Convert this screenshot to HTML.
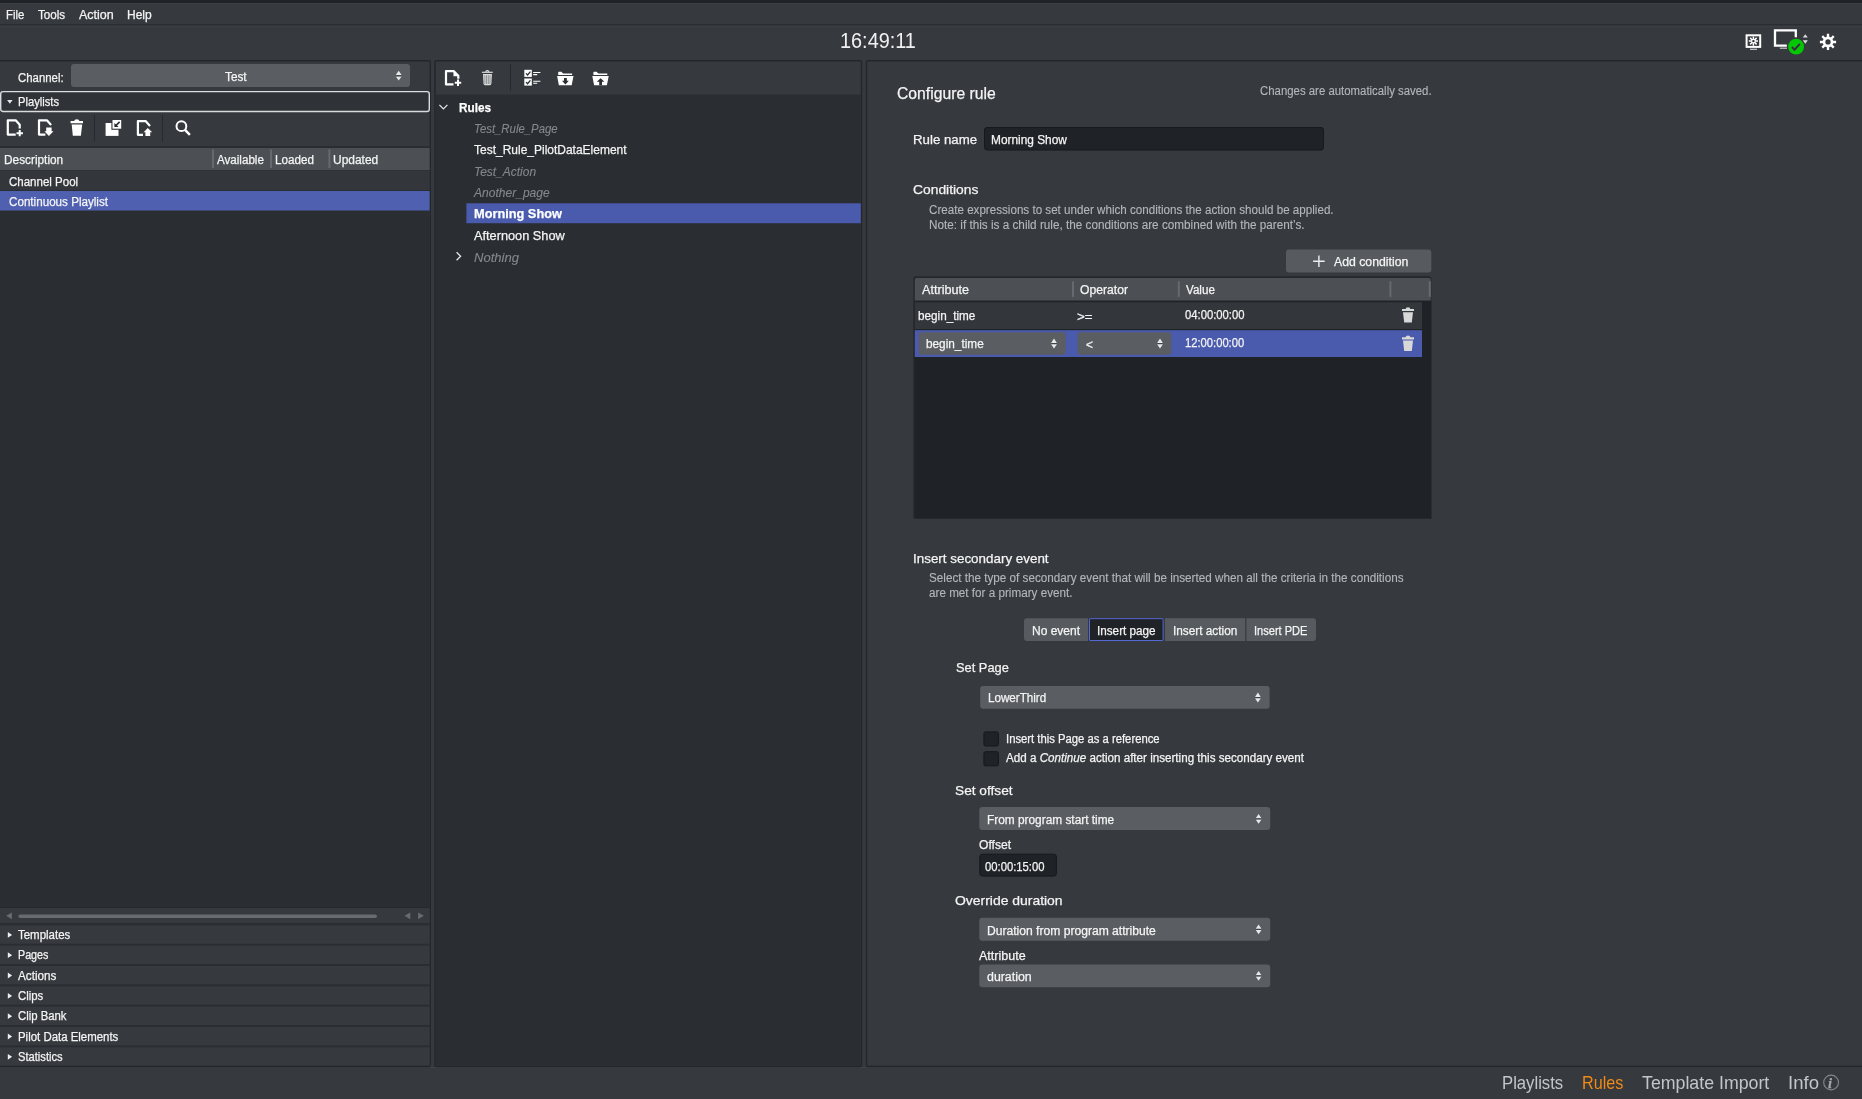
<!DOCTYPE html>
<html><head><meta charset="utf-8"><title>Rules</title>
<style>
html,body{margin:0;padding:0;}
body{width:1862px;height:1099px;overflow:hidden;background:#36393e;font-family:"Liberation Sans",sans-serif;position:relative;}
.b{position:absolute;box-sizing:border-box;}
.t{position:absolute;white-space:nowrap;line-height:20px;height:20px;transform-origin:0 0;-webkit-text-stroke:0.25px;}
svg{position:absolute;overflow:visible;}
</style></head><body>
<svg style="left:0;top:0" width="1862" height="1099" viewBox="0 0 1862 1099"><rect x="0.00" y="0.00" width="1862.00" height="3.00" fill="#1f2226"/>
<rect x="0.00" y="3.00" width="1862.00" height="1.00" fill="#3c3f44"/>
<rect x="0.00" y="24.00" width="1862.00" height="1.00" fill="#2a2d31"/>
<rect x="0.00" y="25.00" width="1862.00" height="1.00" fill="#32353a"/>
<rect x="0.00" y="26.00" width="1862.00" height="1.00" fill="#3c3f44"/>
<rect x="0.00" y="1067.00" width="1862.00" height="1.00" fill="#3d4045"/>
<rect x="-4.30" y="60.70" width="434.60" height="1005.80" rx="1.5000000000000002" fill="#36393e" stroke="#23262a" stroke-width="1.4"/>
<rect x="434.90" y="60.70" width="426.60" height="1005.80" rx="1.5000000000000002" fill="#36393e" stroke="#23262a" stroke-width="1.4"/>
<rect x="866.50" y="60.70" width="1002.80" height="1005.80" rx="1.5000000000000002" fill="#36393e" stroke="#23262a" stroke-width="1.4"/>
<rect x="71.00" y="64.00" width="339.00" height="23.00" rx="3.0" fill="#5a5e62"/>
<rect x="0.70" y="91.60" width="428.60" height="19.90" rx="2.3" fill="#2f3236" stroke="#dadcde" stroke-width="1.4"/>
<rect x="94.00" y="115.00" width="1.00" height="26.50" fill="#26292d"/>
<rect x="162.00" y="115.00" width="1.00" height="26.50" fill="#26292d"/>
<rect x="0.00" y="146.00" width="429.60" height="761.00" fill="#2a2e32"/>
<rect x="0.00" y="148.00" width="429.60" height="22.00" fill="#4c5054"/>
<rect x="212.00" y="149.50" width="2.00" height="18.50" fill="#666a6e"/>
<rect x="270.00" y="149.50" width="2.00" height="18.50" fill="#666a6e"/>
<rect x="328.40" y="149.50" width="2.00" height="18.50" fill="#666a6e"/>
<rect x="0.00" y="170.50" width="429.60" height="19.50" fill="#33363b"/>
<rect x="0.00" y="191.00" width="429.60" height="19.50" fill="#4f60b0"/>
<rect x="0.00" y="907.00" width="429.60" height="1.00" fill="#25282c"/>
<rect x="0.00" y="908.00" width="429.60" height="15.00" fill="#36393e"/>
<rect x="18.40" y="914.60" width="358.60" height="3.40" rx="2.0" fill="#686c70"/>
<rect x="0.00" y="923.00" width="429.60" height="142.80" fill="#2a2d31"/>
<rect x="0.00" y="925.30" width="429.60" height="18.50" fill="#36393e"/>
<rect x="0.00" y="945.60" width="429.60" height="18.50" fill="#36393e"/>
<rect x="0.00" y="965.90" width="429.60" height="18.50" fill="#36393e"/>
<rect x="0.00" y="986.30" width="429.60" height="18.50" fill="#36393e"/>
<rect x="0.00" y="1006.60" width="429.60" height="18.50" fill="#36393e"/>
<rect x="0.00" y="1026.90" width="429.60" height="18.50" fill="#36393e"/>
<rect x="0.00" y="1047.20" width="429.60" height="18.50" fill="#36393e"/>
<rect x="435.60" y="94.50" width="425.20" height="971.30" fill="#2a2e32"/>
<rect x="510.00" y="64.40" width="1.00" height="26.30" fill="#26292d"/>
<rect x="466.40" y="203.30" width="394.40" height="19.90" fill="#4a5bae"/>
<rect x="984.50" y="127.50" width="339.00" height="22.50" rx="2.5" fill="#1f2226" stroke="#17191c" stroke-width="1.0"/>
<rect x="1286.00" y="249.50" width="145.30" height="23.00" rx="3.0" fill="#575b5f"/>
<path d="M916.30 276.20 H1428.30 A3.0 3.0 0 0 1 1431.30 279.20 V518.50 A0.0 0.0 0 0 1 1431.30 518.50 H913.30 A0.0 0.0 0 0 1 913.30 518.50 V279.20 A3.0 3.0 0 0 1 916.30 276.20 Z" fill="#25282c"/>
<rect x="914.80" y="300.60" width="516.50" height="217.90" fill="#1f2226"/>
<path d="M916.80 277.90 H1428.70 A2.0 2.0 0 0 1 1430.70 279.90 V300.60 A0.0 0.0 0 0 1 1430.70 300.60 H914.80 A0.0 0.0 0 0 1 914.80 300.60 V279.90 A2.0 2.0 0 0 1 916.80 277.90 Z" fill="#4c5054"/>
<rect x="1072.00" y="281.30" width="2.00" height="15.60" fill="#666a6e"/>
<rect x="1177.80" y="281.30" width="2.00" height="15.60" fill="#666a6e"/>
<rect x="1389.40" y="281.30" width="2.00" height="15.60" fill="#666a6e"/>
<rect x="1428.80" y="281.30" width="2.00" height="15.60" fill="#666a6e"/>
<rect x="914.80" y="302.20" width="507.20" height="26.80" fill="#33363b"/>
<rect x="914.80" y="330.20" width="507.20" height="26.80" fill="#4a5bae"/>
<rect x="918.70" y="332.20" width="147.10" height="22.50" rx="3.0" fill="#5a5e62"/>
<rect x="1077.60" y="332.20" width="93.70" height="22.50" rx="3.0" fill="#5a5e62"/>
<path d="M1027.00 618.20 H1088.00 A0.0 0.0 0 0 1 1088.00 618.20 V641.00 A0.0 0.0 0 0 1 1088.00 641.00 H1027.00 A3.0 3.0 0 0 1 1024.00 638.00 V621.20 A3.0 3.0 0 0 1 1027.00 618.20 Z" fill="#575b5f"/>
<rect x="1089.50" y="618.70" width="73.60" height="21.80" rx="0.5" fill="#1f2226" stroke="#5468d6" stroke-width="1.0"/>
<rect x="1165.00" y="618.20" width="80.20" height="22.80" fill="#575b5f"/>
<path d="M1246.40 618.20 H1313.00 A3.0 3.0 0 0 1 1316.00 621.20 V638.00 A3.0 3.0 0 0 1 1313.00 641.00 H1246.40 A0.0 0.0 0 0 1 1246.40 641.00 V618.20 A0.0 0.0 0 0 1 1246.40 618.20 Z" fill="#575b5f"/>
<rect x="980.20" y="686.00" width="289.40" height="22.80" rx="3.0" fill="#5a5e62"/>
<rect x="983.90" y="731.90" width="14.50" height="14.10" rx="1.5" fill="#1f2226" stroke="#17191c" stroke-width="1.0"/>
<rect x="983.90" y="751.70" width="14.50" height="14.10" rx="1.5" fill="#1f2226" stroke="#17191c" stroke-width="1.0"/>
<rect x="979.30" y="807.10" width="290.90" height="23.00" rx="3.0" fill="#5a5e62"/>
<rect x="979.80" y="854.20" width="76.60" height="21.90" rx="2.5" fill="#1f2226" stroke="#17191c" stroke-width="1.0"/>
<rect x="979.30" y="917.70" width="290.90" height="23.10" rx="3.0" fill="#5a5e62"/>
<rect x="979.30" y="964.60" width="290.90" height="22.70" rx="3.0" fill="#5a5e62"/></svg>
<svg style="left:0;top:0" width="1862" height="1099" viewBox="0 0 1862 1099"><path d="M15.7 134.55 H7.800000000000001 V120.35 H15.7 L19.7 124.85 V128.45" fill="none" stroke="#ffffff" stroke-width="2.2" stroke-linejoin="round"/><path d="M16.5 133.15 H22.9 M19.7 129.95 V136.35" stroke="#ffffff" stroke-width="2" fill="none"/><path d="M45.4 134.55 H39.0 V120.35 H46.9 L51.099999999999994 125.05" fill="none" stroke="#ffffff" stroke-width="2.2" stroke-linejoin="round"/><path d="M46.2 127.55 H51.599999999999994 V131.25 H53.5 L48.9 136.05 L44.4 131.25 H46.2 Z" fill="#ffffff"/><path d="M70.6 121 H74.2 Q74.4 119.2 76.8 119.2 Q79.2 119.2 79.4 121 H83 V123.3 H70.6 Z M71.7 124.4 H82.2 L80.9 135.7 H72.8 Z" fill="#ffffff"/><rect x="105.6" y="123" width="12.9" height="12.9" fill="#ffffff"/><rect x="111.4" y="119.2" width="10.6" height="10.6" fill="#36393e"/><rect x="112.5" y="120" width="8.7" height="8.7" fill="#ffffff"/><path d="M119.6 121.9 L116 125.5" stroke="#24272b" stroke-width="1.6" fill="none"/><path d="M114.4 122.9 V127.1 H118.6 Z" fill="#24272b"/><path d="M143.0 134.8 H137.9 V121.1 H145.60000000000002 L150.0 126.0" fill="none" stroke="#ffffff" stroke-width="2.2" stroke-linejoin="round"/><path d="M147.8 127.9 L152.20000000000002 132.3 H150.20000000000002 V135.9 H145.4 V132.3 H143.60000000000002 Z" fill="#ffffff"/><circle cx="181.4" cy="126.2" r="4.9" fill="none" stroke="#ffffff" stroke-width="2"/><path d="M185 129.9 L189.9 134.9" stroke="#ffffff" stroke-width="2.5" stroke-linecap="butt"/><path d="M453.5 84.45 H446.0 V71.14999999999999 H453.9 L458.29999999999995 75.64999999999999 V78.85" fill="none" stroke="#ffffff" stroke-width="2.2" stroke-linejoin="round"/><path d="M453.5 71.45 V76.25 H457.9 Z" fill="#ffffff"/><path d="M454.79999999999995 82.75 H461.2 M458.0 79.55 V85.95" stroke="#ffffff" stroke-width="2" fill="none"/><path d="M481.9 72.3 H492.7" stroke="#dcdddd" stroke-width="1.2"/><path d="M485.6 71.8 Q487.3 69.4 489 71.8" stroke="#dcdddd" stroke-width="1.2" fill="none"/><path d="M483 74 H491.9 L491.4 83.6 Q491.3 85.2 489.8 85.2 H485.1 Q483.6 85.2 483.5 83.6 Z" fill="#dcdddd"/><path d="M484.9 75.2 V84" stroke="#4a4d52" stroke-width="0.55"/><path d="M486.6 75.2 V84" stroke="#4a4d52" stroke-width="0.55"/><path d="M488.3 75.2 V84" stroke="#4a4d52" stroke-width="0.55"/><path d="M490.0 75.2 V84" stroke="#4a4d52" stroke-width="0.55"/><rect x="524.3" y="69.8" width="7.5" height="7.1" fill="#ffffff"/><path d="M526 73.39999999999999 L527.6 75.0 L530.4 71.7" stroke="#2a2d31" stroke-width="1.3" fill="none"/><path d="M533.2 72.5 H540.4 M533.2 74.6 H537.2" stroke="#ffffff" stroke-width="1.1"/><rect x="524.3" y="78.5" width="7.5" height="7.1" fill="#ffffff"/><path d="M526 82.1 L527.6 83.7 L530.4 80.4" stroke="#2a2d31" stroke-width="1.3" fill="none"/><path d="M533.2 81.2 H540.4 M533.2 83.3 H537.2" stroke="#ffffff" stroke-width="1.1"/><path d="M558.2 74.9 V72.2 Q558.2 71.7 558.8000000000001 71.7 H561.4 L563.1 73.4 H572.1 V74.9 Z" fill="#ffffff"/><path d="M557.1 76 H573.5 L571.7 85.2 H558.9 Z" fill="#ffffff"/><path d="M564.0 78 H566.8 V80.8 H568.8 L565.4 84.4 L562.0 80.8 H564.0 Z" fill="#2a2d31"/><path d="M593.4 74.9 V72.2 Q593.4 71.7 594.0 71.7 H596.5999999999999 L598.3 73.4 H607.3 V74.9 Z" fill="#ffffff"/><path d="M592.3 76 H608.6999999999999 L606.9 85.2 H594.0999999999999 Z" fill="#ffffff"/><path d="M600.5999999999999 78.3 L604.3999999999999 81.8 H601.9999999999999 V85.3 H599.1999999999999 V81.8 H596.8 Z" fill="#2a2d31"/><rect x="1746.6" y="35.3" width="13.6" height="11.6" fill="none" stroke="#ffffff" stroke-width="2"/><path d="M1750 49.3 H1757" stroke="#c8c8c8" stroke-width="1.2"/><path d="M1755.00 41.10 L1758.00 41.10 M1754.53 42.23 L1756.65 44.35 M1753.40 42.70 L1753.40 45.70 M1752.27 42.23 L1750.15 44.35 M1751.80 41.10 L1748.80 41.10 M1752.27 39.97 L1750.15 37.85 M1753.40 39.50 L1753.40 36.50 M1754.53 39.97 L1756.65 37.85" stroke="#ffffff" stroke-width="1.5"/><circle cx="1753.4" cy="41.1" r="2.3" fill="#ffffff"/><circle cx="1753.4" cy="41.1" r="1.2" fill="#2a2d31"/><path d="M1786.8 45.6 H1775 V30.4 H1795.8 V37.2" fill="none" stroke="#ffffff" stroke-width="2.3"/><path d="M1779.8 48.2 H1787" stroke="#c8c8c8" stroke-width="1.2"/><circle cx="1796.1" cy="46.7" r="7.9" fill="#04c704"/><path d="M1791.9 47 L1794.6 49.7 L1799.9 43.9" fill="none" stroke="#3b2b45" stroke-width="2"/><path d="M1805.3 34.2 L1807.8 37.5 H1802.8 Z M1805.3 43.7 L1807.8 40.3 H1802.8 Z" fill="#dcdcdc"/><path d="M1832.50 41.95 L1836.10 41.95 M1831.18 45.13 L1833.73 47.68 M1828.00 46.45 L1828.00 50.05 M1824.82 45.13 L1822.27 47.68 M1823.50 41.95 L1819.90 41.95 M1824.82 38.77 L1822.27 36.22 M1828.00 37.45 L1828.00 33.85 M1831.18 38.77 L1833.73 36.22" stroke="#ffffff" stroke-width="2.4"/><circle cx="1828.0" cy="41.95" r="4.0" fill="none" stroke="#ffffff" stroke-width="2.7"/><path d="M1402 308.90000000000003 H1405.6 Q1405.8 307.3 1408 307.3 Q1410.2 307.3 1410.4 308.90000000000003 H1414 V311.1 H1402 Z M1403 312.2 H1413 L1411.8 322.6 H1404.2 Z" fill="#d8d8d8"/><path d="M1402 337.20000000000005 H1405.6 Q1405.8 335.6 1408 335.6 Q1410.2 335.6 1410.4 337.20000000000005 H1414 V339.40000000000003 H1402 Z M1403 340.5 H1413 L1411.8 350.90000000000003 H1404.2 Z" fill="#d8d8d8"/><path d="M1313.1 261.3 H1324.7 M1318.9 255.5 V267.1" stroke="#eeeeee" stroke-width="1.4"/><path d="M439.4 104.9 L443.4 108.9 L447.4 104.9" fill="none" stroke="#e6e6e6" stroke-width="1.3"/><path d="M456.6 252.3 L460.6 256.3 L456.6 260.3" fill="none" stroke="#e6e6e6" stroke-width="1.3"/><path d="M7.1 99.9 H12.6 L9.85 103.8 Z" fill="#e8e8e8"/><path d="M7.8 932.0 L12.1 934.9 L7.8 937.8 Z" fill="#eeeeee"/><path d="M7.8 952.3 L12.1 955.2 L7.8 958.1 Z" fill="#eeeeee"/><path d="M7.8 972.6 L12.1 975.5 L7.8 978.4 Z" fill="#eeeeee"/><path d="M7.8 993.0 L12.1 995.9 L7.8 998.8 Z" fill="#eeeeee"/><path d="M7.8 1013.3 L12.1 1016.2 L7.8 1019.1 Z" fill="#eeeeee"/><path d="M7.8 1033.6 L12.1 1036.5 L7.8 1039.4 Z" fill="#eeeeee"/><path d="M7.8 1053.9 L12.1 1056.8 L7.8 1059.7 Z" fill="#eeeeee"/><path d="M11.9 912.5 V919.2 L6.1 915.85 Z M410.3 912.5 V919.2 L404.5 915.85 Z M418.1 912.5 V919.2 L423.9 915.85 Z" fill="#686c70"/><circle cx="1831.1" cy="1082.5" r="7.4" fill="none" stroke="#85888b" stroke-width="1.1"/><path d="M398.70 70.80 L401.60 75.10 L395.80 75.10 Z M398.70 80.60 L401.60 76.40 L395.80 76.40 Z" fill="#e8e8e8"/><path d="M395.90 75.75 H401.50" stroke="#3c3f44" stroke-width="0.9"/><path d="M1054.00 338.60 L1056.90 342.90 L1051.10 342.90 Z M1054.00 348.40 L1056.90 344.20 L1051.10 344.20 Z" fill="#e8e8e8"/><path d="M1051.20 343.55 H1056.80" stroke="#3c3f44" stroke-width="0.9"/><path d="M1160.00 338.60 L1162.90 342.90 L1157.10 342.90 Z M1160.00 348.40 L1162.90 344.20 L1157.10 344.20 Z" fill="#e8e8e8"/><path d="M1157.20 343.55 H1162.80" stroke="#3c3f44" stroke-width="0.9"/><path d="M1257.90 692.60 L1260.80 696.90 L1255.00 696.90 Z M1257.90 702.40 L1260.80 698.20 L1255.00 698.20 Z" fill="#e8e8e8"/><path d="M1255.10 697.55 H1260.70" stroke="#3c3f44" stroke-width="0.9"/><path d="M1258.60 813.90 L1261.50 818.20 L1255.70 818.20 Z M1258.60 823.70 L1261.50 819.50 L1255.70 819.50 Z" fill="#e8e8e8"/><path d="M1255.80 818.85 H1261.40" stroke="#3c3f44" stroke-width="0.9"/><path d="M1258.60 924.50 L1261.50 928.80 L1255.70 928.80 Z M1258.60 934.30 L1261.50 930.10 L1255.70 930.10 Z" fill="#e8e8e8"/><path d="M1255.80 929.45 H1261.40" stroke="#3c3f44" stroke-width="0.9"/><path d="M1258.60 970.90 L1261.50 975.20 L1255.70 975.20 Z M1258.60 980.70 L1261.50 976.50 L1255.70 976.50 Z" fill="#e8e8e8"/><path d="M1255.80 975.85 H1261.40" stroke="#3c3f44" stroke-width="0.9"/></svg>
<div id="tx" style="position:absolute;left:0;top:0;width:1862px;height:1099px;will-change:transform;">
<span id="t0" class="t" style="left:6.4px;top:5.1px;font-size:12.3px;color:#f4f4f4;transform:scaleX(0.9179);">File</span>
<span id="t1" class="t" style="left:38.4px;top:5.1px;font-size:12.3px;color:#f4f4f4;transform:scaleX(0.9471);">Tools</span>
<span id="t2" class="t" style="left:78.7px;top:5.1px;font-size:12.3px;color:#f4f4f4;transform:scaleX(1.0150);">Action</span>
<span id="t3" class="t" style="left:126.7px;top:5.1px;font-size:12.3px;color:#f4f4f4;transform:scaleX(0.9764);">Help</span>
<span id="t4" class="t" style="left:840.0px;top:30.4px;font-size:22.9px;color:#f0f0f0;transform:scaleX(0.8684);-webkit-text-stroke:0;">16:49:11</span>
<span id="t5" class="t" style="left:17.8px;top:68.1px;font-size:12.3px;color:#f4f4f4;transform:scaleX(0.9262);">Channel:</span>
<span id="t6" class="t" style="left:225.1px;top:67.1px;font-size:12.3px;color:#f4f4f4;transform:scaleX(0.9573);">Test</span>
<span id="t7" class="t" style="left:18.1px;top:92.1px;font-size:12.3px;color:#f4f4f4;transform:scaleX(0.9111);">Playlists</span>
<span id="t8" class="t" style="left:3.7px;top:150.1px;font-size:12.3px;color:#f4f4f4;transform:scaleX(0.9624);">Description</span>
<span id="t9" class="t" style="left:216.7px;top:150.1px;font-size:12.3px;color:#f4f4f4;transform:scaleX(0.9439);">Available</span>
<span id="t10" class="t" style="left:275.1px;top:150.1px;font-size:12.3px;color:#f4f4f4;transform:scaleX(0.9477);">Loaded</span>
<span id="t11" class="t" style="left:333.2px;top:150.1px;font-size:12.3px;color:#f4f4f4;transform:scaleX(0.9720);">Updated</span>
<span id="t12" class="t" style="left:8.8px;top:172.1px;font-size:12.3px;color:#f4f4f4;transform:scaleX(0.9358);">Channel Pool</span>
<span id="t13" class="t" style="left:8.8px;top:192.1px;font-size:12.3px;color:#f4f4f4;transform:scaleX(0.9467);">Continuous Playlist</span>
<span id="t14" class="t" style="left:18.2px;top:925.1px;font-size:12.3px;color:#f4f4f4;transform:scaleX(0.9331);">Templates</span>
<span id="t15" class="t" style="left:18.2px;top:945.1px;font-size:12.3px;color:#f4f4f4;transform:scaleX(0.8717);">Pages</span>
<span id="t16" class="t" style="left:18.2px;top:966.1px;font-size:12.3px;color:#f4f4f4;transform:scaleX(0.9522);">Actions</span>
<span id="t17" class="t" style="left:18.2px;top:986.1px;font-size:12.3px;color:#f4f4f4;transform:scaleX(0.9253);">Clips</span>
<span id="t18" class="t" style="left:18.2px;top:1006.1px;font-size:12.3px;color:#f4f4f4;transform:scaleX(0.9213);">Clip Bank</span>
<span id="t19" class="t" style="left:18.2px;top:1027.1px;font-size:12.3px;color:#f4f4f4;transform:scaleX(0.9287);">Pilot Data Elements</span>
<span id="t20" class="t" style="left:18.2px;top:1047.1px;font-size:12.3px;color:#f4f4f4;transform:scaleX(0.9085);">Statistics</span>
<span id="t21" class="t" style="left:459.2px;top:97.7px;font-size:13.4px;color:#ffffff;transform:scaleX(0.8775);font-weight:bold;">Rules</span>
<span id="t22" class="t" style="left:474.2px;top:118.7px;font-size:13.4px;color:#85888b;transform:scaleX(0.8485);font-style:italic;-webkit-text-stroke:0.12px;">Test_Rule_Page</span>
<span id="t23" class="t" style="left:474.2px;top:139.7px;font-size:13.4px;color:#f4f4f4;transform:scaleX(0.8953);">Test_Rule_PilotDataElement</span>
<span id="t24" class="t" style="left:474.2px;top:161.7px;font-size:13.4px;color:#85888b;transform:scaleX(0.8937);font-style:italic;-webkit-text-stroke:0.12px;">Test_Action</span>
<span id="t25" class="t" style="left:474.2px;top:182.7px;font-size:13.4px;color:#85888b;transform:scaleX(0.8997);font-style:italic;-webkit-text-stroke:0.12px;">Another_page</span>
<span id="t26" class="t" style="left:474.2px;top:203.7px;font-size:13.4px;color:#ffffff;transform:scaleX(0.9530);font-weight:bold;">Morning Show</span>
<span id="t27" class="t" style="left:474.2px;top:225.7px;font-size:13.4px;color:#f4f4f4;transform:scaleX(0.9518);">Afternoon Show</span>
<span id="t28" class="t" style="left:474.2px;top:247.7px;font-size:13.4px;color:#85888b;transform:scaleX(0.9749);font-style:italic;-webkit-text-stroke:0.12px;">Nothing</span>
<span id="t29" class="t" style="left:897.4px;top:82.8px;font-size:16.1px;color:#f4f4f4;transform:scaleX(0.9763);">Configure rule</span>
<span id="t30" class="t" style="left:1260.0px;top:81.1px;font-size:12.3px;color:#b4b7ba;transform:scaleX(0.9263);-webkit-text-stroke:0.12px;">Changes are automatically saved.</span>
<span id="t31" class="t" style="left:913.2px;top:129.6px;font-size:13.6px;color:#f4f4f4;transform:scaleX(0.9749);">Rule name</span>
<span id="t32" class="t" style="left:990.9px;top:130.1px;font-size:12.3px;color:#f4f4f4;transform:scaleX(0.9655);">Morning Show</span>
<span id="t33" class="t" style="left:913.2px;top:179.6px;font-size:13.6px;color:#f4f4f4;transform:scaleX(1.0181);">Conditions</span>
<span id="t34" class="t" style="left:928.8px;top:200.1px;font-size:12.3px;color:#b4b7ba;transform:scaleX(0.9455);-webkit-text-stroke:0.12px;">Create expressions to set under which conditions the action should be applied.</span>
<span id="t35" class="t" style="left:928.8px;top:215.1px;font-size:12.3px;color:#b4b7ba;transform:scaleX(0.9545);-webkit-text-stroke:0.12px;">Note: if this is a child rule, the conditions are combined with the parent’s.</span>
<span id="t36" class="t" style="left:1333.8px;top:252.1px;font-size:12.3px;color:#f4f4f4;transform:scaleX(0.9969);">Add condition</span>
<span id="t37" class="t" style="left:921.6px;top:280.1px;font-size:12.3px;color:#f4f4f4;transform:scaleX(1.0263);">Attribute</span>
<span id="t38" class="t" style="left:1080.4px;top:280.1px;font-size:12.3px;color:#f4f4f4;transform:scaleX(0.9891);">Operator</span>
<span id="t39" class="t" style="left:1186.2px;top:280.1px;font-size:12.3px;color:#f4f4f4;transform:scaleX(0.9461);">Value</span>
<span id="t40" class="t" style="left:918.4px;top:306.1px;font-size:12.3px;color:#f4f4f4;transform:scaleX(0.9523);">begin_time</span>
<span id="t41" class="t" style="left:1077.0px;top:307.1px;font-size:12.3px;color:#f4f4f4;transform:scaleX(1.0852);">&gt;=</span>
<span id="t42" class="t" style="left:1184.9px;top:305.1px;font-size:12.3px;color:#f4f4f4;transform:scaleX(0.9158);">04:00:00:00</span>
<span id="t43" class="t" style="left:925.8px;top:334.1px;font-size:12.3px;color:#f4f4f4;transform:scaleX(0.9589);">begin_time</span>
<span id="t44" class="t" style="left:1085.6px;top:335.1px;font-size:12.3px;color:#f4f4f4;transform:scaleX(0.9739);">&lt;</span>
<span id="t45" class="t" style="left:1185.4px;top:333.1px;font-size:12.3px;color:#f4f4f4;transform:scaleX(0.9112);">12:00:00:00</span>
<span id="t46" class="t" style="left:913.2px;top:548.6px;font-size:13.6px;color:#f4f4f4;transform:scaleX(0.9860);">Insert secondary event</span>
<span id="t47" class="t" style="left:928.8px;top:568.1px;font-size:12.3px;color:#b4b7ba;transform:scaleX(0.9509);-webkit-text-stroke:0.12px;">Select the type of secondary event that will be inserted when all the criteria in the conditions</span>
<span id="t48" class="t" style="left:928.8px;top:583.1px;font-size:12.3px;color:#b4b7ba;transform:scaleX(0.9500);-webkit-text-stroke:0.12px;">are met for a primary event.</span>
<span id="t49" class="t" style="left:1032.4px;top:621.1px;font-size:12.3px;color:#f4f4f4;transform:scaleX(0.9752);">No event</span>
<span id="t50" class="t" style="left:1097.2px;top:621.1px;font-size:12.3px;color:#f4f4f4;transform:scaleX(0.9524);">Insert page</span>
<span id="t51" class="t" style="left:1173.0px;top:621.1px;font-size:12.3px;color:#f4f4f4;transform:scaleX(0.9597);">Insert action</span>
<span id="t52" class="t" style="left:1254.4px;top:621.1px;font-size:12.3px;color:#f4f4f4;transform:scaleX(0.8996);">Insert PDE</span>
<span id="t53" class="t" style="left:955.8px;top:657.6px;font-size:13.6px;color:#f4f4f4;transform:scaleX(0.9439);">Set Page</span>
<span id="t54" class="t" style="left:987.7px;top:688.1px;font-size:12.3px;color:#f4f4f4;transform:scaleX(0.9461);">LowerThird</span>
<span id="t55" class="t" style="left:1006.0px;top:729.1px;font-size:12.3px;color:#f4f4f4;transform:scaleX(0.9172);">Insert this Page as a reference</span>
<span id="t56" class="t" style="left:1006.0px;top:748.1px;font-size:12.3px;color:#f4f4f4;transform:scaleX(0.9456);">Add a <i>Continue</i> action after inserting this secondary event</span>
<span id="t57" class="t" style="left:955.4px;top:780.6px;font-size:13.6px;color:#f4f4f4;transform:scaleX(1.0072);">Set offset</span>
<span id="t58" class="t" style="left:986.7px;top:810.1px;font-size:12.3px;color:#f4f4f4;transform:scaleX(0.9645);">From program start time</span>
<span id="t59" class="t" style="left:979.0px;top:835.1px;font-size:12.3px;color:#f4f4f4;transform:scaleX(0.9849);">Offset</span>
<span id="t60" class="t" style="left:985.4px;top:857.1px;font-size:12.3px;color:#f4f4f4;transform:scaleX(0.9158);">00:00:15:00</span>
<span id="t61" class="t" style="left:955.4px;top:890.6px;font-size:13.6px;color:#f4f4f4;transform:scaleX(1.0245);">Override duration</span>
<span id="t62" class="t" style="left:986.7px;top:921.1px;font-size:12.3px;color:#f4f4f4;transform:scaleX(0.9840);">Duration from program attribute</span>
<span id="t63" class="t" style="left:979.0px;top:946.1px;font-size:12.3px;color:#f4f4f4;transform:scaleX(1.0175);">Attribute</span>
<span id="t64" class="t" style="left:986.7px;top:967.1px;font-size:12.3px;color:#f4f4f4;transform:scaleX(1.0056);">duration</span>
<span id="t65" class="t" style="left:1501.9px;top:1073.2px;font-size:17.7px;color:#c3c6c9;transform:scaleX(0.9434);-webkit-text-stroke:0;">Playlists</span>
<span id="t66" class="t" style="left:1581.8px;top:1073.2px;font-size:17.7px;color:#ef8a17;transform:scaleX(0.9152);-webkit-text-stroke:0;">Rules</span>
<span id="t67" class="t" style="left:1641.8px;top:1073.2px;font-size:17.7px;color:#c3c6c9;transform:scaleX(1.0038);-webkit-text-stroke:0;">Template Import</span>
<span id="t68" class="t" style="left:1787.7px;top:1073.2px;font-size:17.7px;color:#c3c6c9;transform:scaleX(1.0503);-webkit-text-stroke:0;">Info</span>
<span class="t" style="left:1828.1px;top:1072.8px;font-family:'Liberation Serif',serif;font-style:italic;font-weight:bold;font-size:14.5px;color:#a4a7aa;">i</span><!--INFOI-->
</div>
</body></html>
